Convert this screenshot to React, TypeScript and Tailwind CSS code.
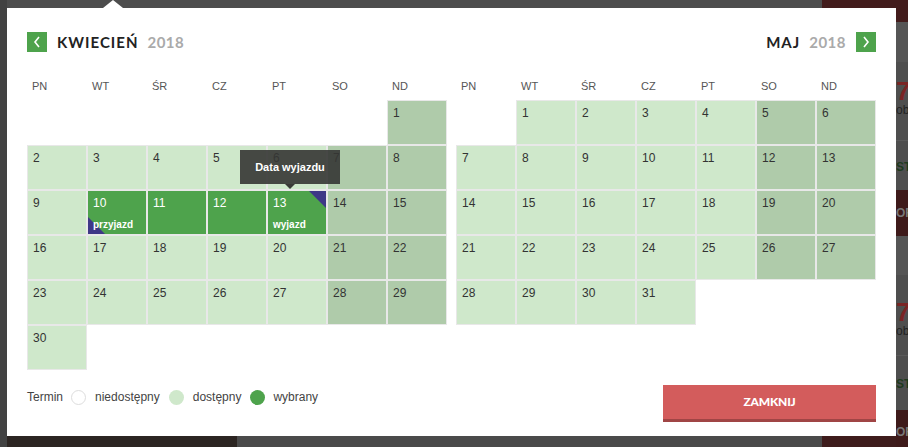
import React from 'react';

type Day = { n: number; weekend?: boolean; sel?: 'start' | 'mid' | 'end' } | null;

const DAYS = ['PN', 'WT', 'ŚR', 'CZ', 'PT', 'SO', 'ND'];

function buildMonth(offset: number, length: number, selected: Record<number, 'start' | 'mid' | 'end'> = {}) {
  const cells: Day[] = [];
  for (let i = 0; i < offset; i++) cells.push(null);
  for (let d = 1; d <= length; d++) {
    const col = (offset + d - 1) % 7;
    cells.push({ n: d, weekend: col >= 5, sel: selected[d] });
  }
  return cells;
}

const april = buildMonth(6, 30, { 10: 'start', 11: 'mid', 12: 'mid', 13: 'end' });
const may = buildMonth(1, 31);

function DayCell({ day }: { day: Day }) {
  if (!day) return <div className="h-[45px]" />;
  const bg = day.sel ? 'bg-[#4ea34c] text-white' : day.weekend ? 'bg-[#afcbaa] text-[#333]' : 'bg-[#cfe8cb] text-[#333]';
  return (
    <div className={`relative h-[45px] border border-[#e8e8e8] overflow-hidden ${bg}`}>
      {day.sel === 'start' && (
        <span className="absolute left-0 bottom-0 w-0 h-0 border-b-[17px] border-b-[#3e3787] border-r-[17px] border-r-transparent" />
      )}
      {day.sel === 'end' && (
        <span className="absolute right-0 top-0 w-0 h-0 border-t-[17px] border-t-[#3e3787] border-l-[17px] border-l-transparent" />
      )}
      <div className="relative pl-[5px] pt-[5px] text-[12px] leading-[14px]">{day.n}</div>
      {day.sel === 'start' && (
        <div className="absolute left-[5px] bottom-[3px] text-[10px] font-bold leading-[12px]">przyjazd</div>
      )}
      {day.sel === 'end' && (
        <div className="absolute left-[5px] bottom-[3px] text-[10px] font-bold leading-[12px]">wyjazd</div>
      )}
    </div>
  );
}

function Arrow({ dir }: { dir: 'left' | 'right' }) {
  return (
    <button className="w-5 h-5 bg-[#4ea34c] flex items-center justify-center">
      <svg width="8" height="12" viewBox="0 0 8 12" fill="none" stroke="white" strokeWidth="1.6">
        {dir === 'left' ? <path d="M6 1 L2 6 L6 11" /> : <path d="M2 1 L6 6 L2 11" />}
      </svg>
    </button>
  );
}

function Month({ name, cells, dir, tooltip }: { name: string; cells: Day[]; dir: 'left' | 'right'; tooltip?: boolean }) {
  return (
    <div className="w-[420px]">
      <div className={`flex items-center h-5 ${dir === 'right' ? 'justify-end' : ''}`}>
        {dir === 'left' && <Arrow dir="left" />}
        <span className={`font-['Lato',sans-serif] font-bold text-[15px] tracking-[1px] text-[#222] ${dir === 'left' ? 'ml-[10px]' : ''}`}>
          {name}
        </span>
        <span className="font-['Lato',sans-serif] font-bold text-[15px] tracking-[0.5px] text-[#aaa] ml-[9px]">2018</span>
        {dir === 'right' && <span className="ml-[10px]"><Arrow dir="right" /></span>}
      </div>
      <div className="grid grid-cols-7 mt-[27px] h-[21px]">
        {DAYS.map((d) => (
          <div key={d} className="pl-[5px] text-[11px] leading-[14px] text-[#555]">{d}</div>
        ))}
      </div>
      <div className="relative grid grid-cols-7">
        {cells.map((c, i) => (
          <DayCell key={i} day={c} />
        ))}
        {tooltip && (
          <div className="absolute left-[213px] top-[50px] w-[100px] h-[34px] bg-[#353634]/90 text-white text-[11px] font-bold flex items-center justify-center">
            Data wyjazdu
            <span className="absolute left-[45px] -bottom-[5px] w-0 h-0 border-l-[5px] border-r-[5px] border-t-[5px] border-l-transparent border-r-transparent border-t-[#3a3b38]" />
          </div>
        )}
      </div>
    </div>
  );
}

function Background() {
  return (
    <div className="flex h-full">
      <div className="w-[7px] bg-[#424242]" />
      <div className="flex-1 flex flex-col">
        <div className="h-[8px] flex">
          <div className="flex-1 bg-[#4d4d4d]" />
          <div className="w-[74px] bg-[#431c1c]" />
        </div>
        <div className="flex-1 bg-[#4a4a4a]" />
        <div className="h-[11px] flex">
          <div className="w-[230px] bg-[#2c2522]" />
          <div className="flex-1 bg-[#4a4a4a]" />
          <div className="w-[74px] bg-[#3e1c1c]" />
        </div>
      </div>
      <div className="w-[12px] flex flex-col overflow-hidden font-['Liberation_Sans',sans-serif] whitespace-nowrap">
        <div className="h-[22px] bg-[#431c1c]" />
        <div className="h-[40px] bg-[#555]" />
        <div className="h-[78px] bg-[#4e4e4e] pt-[16px] leading-none">
          <div className="text-[26px] font-bold text-[#7a2424]">7,</div>
          <div className="text-[12px] text-[#222]">ob</div>
        </div>
        <div className="h-[50px] bg-[#4e4e4e] border-t border-[#5a5a5a] pt-[20px] text-[12px] font-bold text-[#1e3a1e] leading-none">ST</div>
        <div className="h-[46px] bg-[#3e1a1a] pt-[17px] text-[12px] font-bold text-[#777] leading-none">OF</div>
        <div className="h-[39px] bg-[#555]" />
        <div className="h-[80px] bg-[#4e4e4e] pt-[24px] leading-none">
          <div className="text-[26px] font-bold text-[#7a2424]">7,</div>
          <div className="text-[12px] text-[#222]">ob</div>
        </div>
        <div className="h-[55px] bg-[#4e4e4e] border-t border-[#5a5a5a] pt-[22px] text-[12px] font-bold text-[#1e3a1e] leading-none">ST</div>
        <div className="flex-1 bg-[#3e1a1a] pt-[16px] text-[12px] font-bold text-[#777] leading-none">OF</div>
      </div>
    </div>
  );
}

export default function App() {
  return (
    <div className="relative w-[908px] h-[447px] overflow-hidden bg-[#4a4a4a] font-['Liberation_Sans',Arial,sans-serif]">
      <Background />
      {/* popup caret */}
      <span className="absolute left-[103px] top-0 w-0 h-0 border-l-[10px] border-r-[10px] border-b-[8px] border-l-transparent border-r-transparent border-b-white" />
      {/* modal */}
      <div className="absolute left-[7px] top-[8px] w-[889px] h-[428px] bg-white pl-[20px] pr-[20px] pt-[24px]">
        <div className="flex gap-[9px]">
          <Month name="KWIECIEŃ" cells={april} dir="left" tooltip />
          <Month name="MAJ" cells={may} dir="right" />
        </div>
        <div className="flex items-start justify-between mt-[15px]">
          <div className="flex items-center text-[12px] text-[#444] mt-[3px]">
            <span>Termin</span>
            <span className="ml-[8px] w-[15px] h-[15px] rounded-full border border-[#ddd] bg-white" />
            <span className="ml-[9px]">niedostępny</span>
            <span className="ml-[9px] w-[15px] h-[15px] rounded-full bg-[#cfe8cb]" />
            <span className="ml-[9px]">dostępny</span>
            <span className="ml-[9px] w-[15px] h-[15px] rounded-full bg-[#4ea34c]" />
            <span className="ml-[8px]">wybrany</span>
          </div>
          <button className="w-[213px] h-[37px] bg-[#d35c5c] border-b-[3px] border-[#a04545] text-white font-['Lato',sans-serif] font-black text-[12px] tracking-[-0.2px]">
            ZAMKNIJ
          </button>
        </div>
      </div>
    </div>
  );
}
